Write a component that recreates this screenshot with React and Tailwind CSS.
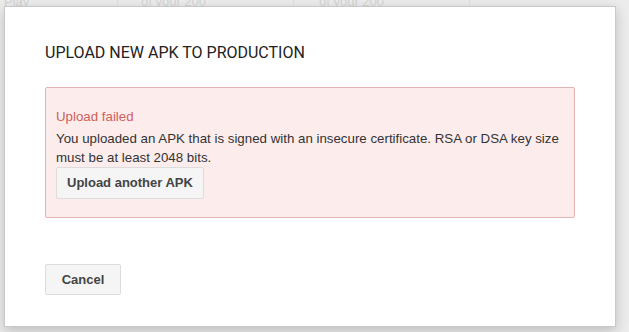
import React from 'react';

const font = { fontFamily: '"Liberation Sans", Arial, sans-serif' };

const GrayButton = ({ children, className = '' }) => (
  <button
    className={`rounded-[2px] border border-[#dcdcdc] bg-[#f5f5f5] text-[13px] font-bold text-[#444] ${className}`}
  >
    {children}
  </button>
);

export default function App() {
  return (
    <div className="relative h-[332px] w-[629px] overflow-hidden bg-[#ececec]" style={font}>
      {/* faded page behind the overlay */}
      <div className="absolute left-0 top-[-8px] flex w-full text-[13px] text-[#d4d4d4]">
        <span className="w-[117px] pl-[4px]">Play</span>
        <span className="w-[176px] border-l border-[#e0e0e0] pl-[23px]">of your 200</span>
        <span className="w-[177px] border-l border-r border-[#e0e0e0] pl-[25px]">of your 200</span>
      </div>

      <div className="absolute left-[4px] top-[6px] flex h-[321px] w-[612px] flex-col border border-[#c9c9c9] bg-white px-[40px] shadow-[0_4px_12px_rgba(0,0,0,0.2)]">
        <h1 className="mt-[36px] text-[16px] leading-[20px] text-[#222]" style={{ fontFamily: 'Roboto, "Liberation Sans", sans-serif' }}>
          UPLOAD NEW APK TO PRODUCTION
        </h1>

        <div className="mt-[24px] w-[530px] rounded-[2px] border border-[#e3b4b4] bg-[#fcecec] px-[10px] pb-[18px] pt-[20px]">
          <p className="text-[13.3px] leading-[18px] text-[#d0605a]">Upload failed</p>
          <p className="mt-[3px] text-[13.3px] leading-[19px] text-[#333]">
            You uploaded an APK that is signed with an insecure certificate. RSA or DSA key size must be at least 2048 bits.
          </p>
          <GrayButton className="h-[32px] px-[10px]">Upload another APK</GrayButton>
        </div>

        <div className="mt-[46px]">
          <GrayButton className="h-[31px] w-[76px]">Cancel</GrayButton>
        </div>
      </div>
    </div>
  );
}
